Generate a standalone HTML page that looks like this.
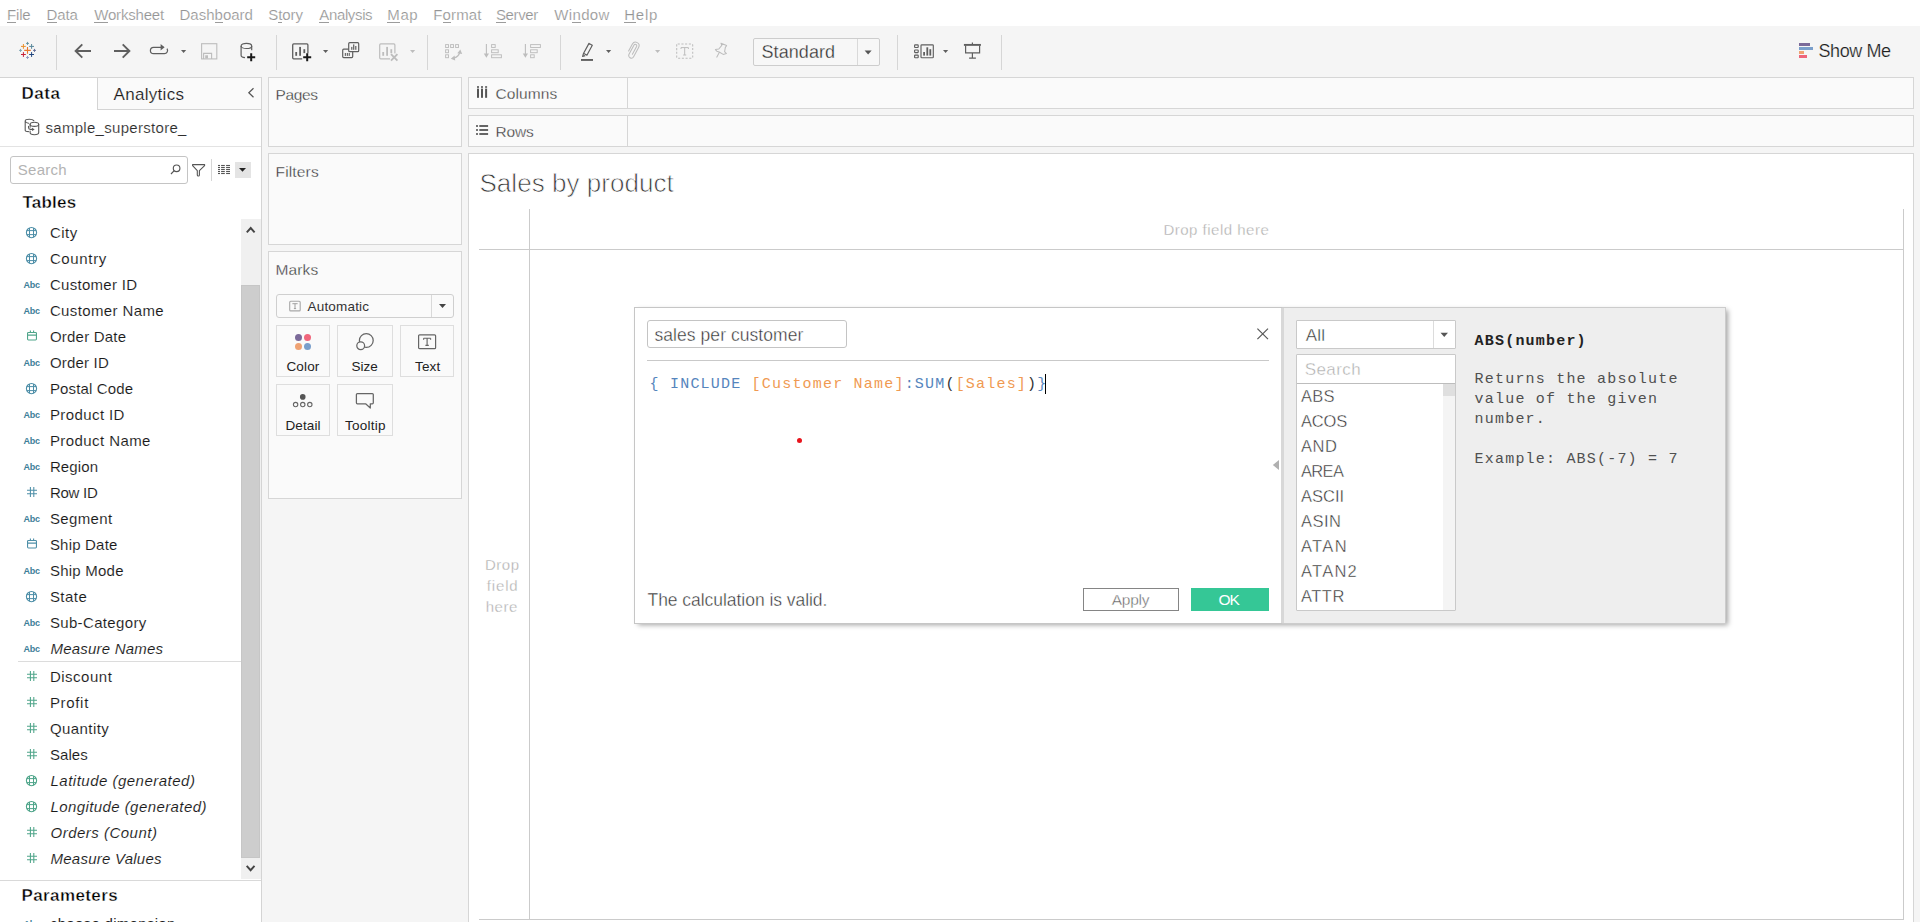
<!DOCTYPE html>
<html lang="en"><head><meta charset="utf-8"><title>Tableau - Sales by product</title>
<style>
html,body{margin:0;padding:0}
body{width:1920px;height:922px;overflow:hidden;position:relative;background:#f5f5f5;font-family:"Liberation Sans", sans-serif;-webkit-font-smoothing:antialiased}
.b{position:absolute;box-sizing:border-box;display:block}
.t{position:absolute;white-space:pre;margin:0;padding:0}
u{text-decoration:none;background:linear-gradient(#9c9c9c,#9c9c9c) no-repeat 0 16px/100% 1px}
</style></head>
<body>
<div class="b" style="left:0px;top:0px;width:1920px;height:26px;background:#ffffff;"></div>
<div class="t" style="left:7.00px;top:4.80px;font-size:15px;line-height:20px;color:#949494;letter-spacing:-0.167px;-webkit-text-stroke:0.2px #fff;"><u>F</u>ile</div>
<div class="t" style="left:46.50px;top:4.80px;font-size:15px;line-height:20px;color:#949494;letter-spacing:-0.083px;-webkit-text-stroke:0.2px #fff;"><u>D</u>ata</div>
<div class="t" style="left:94.25px;top:4.80px;font-size:15px;line-height:20px;color:#949494;letter-spacing:-0.188px;-webkit-text-stroke:0.2px #fff;"><u>W</u>orksheet</div>
<div class="t" style="left:179.50px;top:4.80px;font-size:15px;line-height:20px;color:#949494;-webkit-text-stroke:0.2px #fff;">Dash<u>b</u>oard</div>
<div class="t" style="left:268.25px;top:4.80px;font-size:15px;line-height:20px;color:#949494;letter-spacing:-0.062px;-webkit-text-stroke:0.2px #fff;">S<u>t</u>ory</div>
<div class="t" style="left:319.25px;top:4.80px;font-size:15px;line-height:20px;color:#949494;letter-spacing:-0.357px;-webkit-text-stroke:0.2px #fff;"><u>A</u>nalysis</div>
<div class="t" style="left:387.25px;top:4.80px;font-size:15px;line-height:20px;color:#949494;letter-spacing:0.625px;-webkit-text-stroke:0.2px #fff;"><u>M</u>ap</div>
<div class="t" style="left:433.25px;top:4.80px;font-size:15px;line-height:20px;color:#949494;letter-spacing:0.150px;-webkit-text-stroke:0.2px #fff;">F<u>o</u>rmat</div>
<div class="t" style="left:496.00px;top:4.80px;font-size:15px;line-height:20px;color:#949494;letter-spacing:-0.400px;-webkit-text-stroke:0.2px #fff;"><u>S</u>erver</div>
<div class="t" style="left:554.25px;top:4.80px;font-size:15px;line-height:20px;color:#949494;letter-spacing:0.350px;-webkit-text-stroke:0.2px #fff;">Wi<u>n</u>dow</div>
<div class="t" style="left:624.25px;top:4.80px;font-size:15px;line-height:20px;color:#949494;letter-spacing:0.750px;-webkit-text-stroke:0.2px #fff;"><u>H</u>elp</div>
<div class="b" style="left:0px;top:26px;width:1920px;height:51px;background:#f5f5f5;"></div>
<div class="b" style="left:56px;top:35px;width:1px;height:35px;background:#d6d6d6"></div>
<div class="b" style="left:276px;top:35px;width:1px;height:35px;background:#d6d6d6"></div>
<div class="b" style="left:427px;top:35px;width:1px;height:35px;background:#d6d6d6"></div>
<div class="b" style="left:560px;top:35px;width:1px;height:35px;background:#d6d6d6"></div>
<div class="b" style="left:897px;top:35px;width:1px;height:35px;background:#d6d6d6"></div>
<div class="b" style="left:1001px;top:35px;width:1px;height:35px;background:#d6d6d6"></div>
<div class="b" style="left:0px;top:77px;width:262px;height:845px;background:#ffffff;"></div>
<div class="b" style="left:0px;top:77px;width:262px;height:1px;background:#d4d4d4"></div>
<div class="b" style="left:261px;top:77px;width:1px;height:845px;background:#d4d4d4"></div>
<div class="b" style="left:97px;top:78px;width:164px;height:32px;background:#fafafa;"></div>
<div class="b" style="left:97px;top:78px;width:1px;height:32px;background:#d4d4d4"></div>
<div class="b" style="left:97px;top:109px;width:164px;height:1px;background:#d4d4d4"></div>
<div class="t" style="left:21.50px;top:82.80px;font-size:17px;line-height:22px;color:#000;font-weight:bold;letter-spacing:0.500px;-webkit-text-stroke:0.4px #fff;">Data</div>
<div class="t" style="left:113.50px;top:83.80px;font-size:17px;line-height:22px;color:#1a1a1a;letter-spacing:0.312px;-webkit-text-stroke:0.15px #fafafa;">Analytics</div>
<div class="t" style="left:45.50px;top:117.80px;font-size:15px;line-height:20px;color:#2e2e2e;letter-spacing:0.294px;-webkit-text-stroke:0.15px #fff;">sample_superstore_</div>
<div class="b" style="left:0px;top:146px;width:261px;height:1px;background:#e3e3e3"></div>
<div class="b" style="left:10px;top:156px;width:178px;height:28px;background:#fff;border:1px solid #c4c4c4;border-radius:3px;"></div>
<div class="t" style="left:17.70px;top:159.80px;font-size:15px;line-height:20px;color:#b3b3b3;letter-spacing:0.300px;">Search</div>
<div class="b" style="left:211px;top:159px;width:1px;height:22px;background:#d6d6d6"></div>
<div class="b" style="left:235px;top:162px;width:16px;height:16px;background:#e4e4e4;"></div>
<div class="t" style="left:22.50px;top:191.80px;font-size:17px;line-height:22px;color:#000;font-weight:bold;letter-spacing:0.200px;-webkit-text-stroke:0.4px #fff;">Tables</div>
<div class="t" style="left:49.90px;top:222.80px;font-size:15px;line-height:20px;color:#1a1a1a;letter-spacing:0.500px;-webkit-text-stroke:0.1px #fff;">City</div>
<div class="t" style="left:49.90px;top:248.80px;font-size:15px;line-height:20px;color:#1a1a1a;letter-spacing:0.650px;-webkit-text-stroke:0.1px #fff;">Country</div>
<div class="t" style="left:49.90px;top:274.80px;font-size:15px;line-height:20px;color:#1a1a1a;letter-spacing:0.290px;-webkit-text-stroke:0.1px #fff;">Customer ID</div>
<div class="t" style="left:49.90px;top:300.80px;font-size:15px;line-height:20px;color:#1a1a1a;letter-spacing:0.375px;-webkit-text-stroke:0.1px #fff;">Customer Name</div>
<div class="t" style="left:49.90px;top:326.80px;font-size:15px;line-height:20px;color:#1a1a1a;letter-spacing:0.222px;-webkit-text-stroke:0.1px #fff;">Order Date</div>
<div class="t" style="left:49.90px;top:352.80px;font-size:15px;line-height:20px;color:#1a1a1a;letter-spacing:0.200px;-webkit-text-stroke:0.1px #fff;">Order ID</div>
<div class="t" style="left:49.90px;top:378.80px;font-size:15px;line-height:20px;color:#1a1a1a;letter-spacing:0.160px;-webkit-text-stroke:0.1px #fff;">Postal Code</div>
<div class="t" style="left:49.90px;top:404.80px;font-size:15px;line-height:20px;color:#1a1a1a;letter-spacing:0.411px;-webkit-text-stroke:0.1px #fff;">Product ID</div>
<div class="t" style="left:49.90px;top:430.80px;font-size:15px;line-height:20px;color:#1a1a1a;letter-spacing:0.427px;-webkit-text-stroke:0.1px #fff;">Product Name</div>
<div class="t" style="left:49.90px;top:456.80px;font-size:15px;line-height:20px;color:#1a1a1a;letter-spacing:0.120px;-webkit-text-stroke:0.1px #fff;">Region</div>
<div class="t" style="left:49.90px;top:482.80px;font-size:15px;line-height:20px;color:#1a1a1a;letter-spacing:-0.240px;-webkit-text-stroke:0.1px #fff;">Row ID</div>
<div class="t" style="left:49.90px;top:508.80px;font-size:15px;line-height:20px;color:#1a1a1a;letter-spacing:0.383px;-webkit-text-stroke:0.1px #fff;">Segment</div>
<div class="t" style="left:49.90px;top:534.80px;font-size:15px;line-height:20px;color:#1a1a1a;letter-spacing:0.200px;-webkit-text-stroke:0.1px #fff;">Ship Date</div>
<div class="t" style="left:49.90px;top:560.80px;font-size:15px;line-height:20px;color:#1a1a1a;letter-spacing:0.238px;-webkit-text-stroke:0.1px #fff;">Ship Mode</div>
<div class="t" style="left:49.90px;top:586.80px;font-size:15px;line-height:20px;color:#1a1a1a;letter-spacing:0.475px;-webkit-text-stroke:0.1px #fff;">State</div>
<div class="t" style="left:49.90px;top:612.80px;font-size:15px;line-height:20px;color:#1a1a1a;letter-spacing:0.345px;-webkit-text-stroke:0.1px #fff;">Sub-Category</div>
<div class="t" style="left:50.50px;top:638.80px;font-size:15px;line-height:20px;color:#1a1a1a;font-style:italic;letter-spacing:0.200px;-webkit-text-stroke:0.1px #fff;">Measure Names</div>
<div class="t" style="left:49.90px;top:666.80px;font-size:15px;line-height:20px;color:#1a1a1a;letter-spacing:0.514px;-webkit-text-stroke:0.1px #fff;">Discount</div>
<div class="t" style="left:49.90px;top:692.80px;font-size:15px;line-height:20px;color:#1a1a1a;letter-spacing:0.680px;-webkit-text-stroke:0.1px #fff;">Profit</div>
<div class="t" style="left:49.90px;top:718.80px;font-size:15px;line-height:20px;color:#1a1a1a;letter-spacing:0.443px;-webkit-text-stroke:0.1px #fff;">Quantity</div>
<div class="t" style="left:49.90px;top:744.80px;font-size:15px;line-height:20px;color:#1a1a1a;letter-spacing:0.075px;-webkit-text-stroke:0.1px #fff;">Sales</div>
<div class="t" style="left:50.50px;top:770.80px;font-size:15px;line-height:20px;color:#1a1a1a;font-style:italic;letter-spacing:0.489px;-webkit-text-stroke:0.1px #fff;">Latitude (generated)</div>
<div class="t" style="left:50.50px;top:796.80px;font-size:15px;line-height:20px;color:#1a1a1a;font-style:italic;letter-spacing:0.415px;-webkit-text-stroke:0.1px #fff;">Longitude (generated)</div>
<div class="t" style="left:50.50px;top:822.80px;font-size:15px;line-height:20px;color:#1a1a1a;font-style:italic;letter-spacing:0.492px;-webkit-text-stroke:0.1px #fff;">Orders (Count)</div>
<div class="t" style="left:50.50px;top:848.80px;font-size:15px;line-height:20px;color:#1a1a1a;font-style:italic;letter-spacing:0.246px;-webkit-text-stroke:0.1px #fff;">Measure Values</div>
<div class="b" style="left:18px;top:661px;width:223px;height:1px;background:#dcdcdc"></div>
<div class="b" style="left:241px;top:219px;width:20px;height:660px;background:#f0f0f0;"></div>
<div class="b" style="left:241px;top:285px;width:19px;height:573px;background:#cdcdcd;border:1px solid #c6c6c6;"></div>
<div class="b" style="left:0px;top:880px;width:261px;height:1px;background:#d9d9d9"></div>
<div class="t" style="left:21.50px;top:884.80px;font-size:17px;line-height:22px;color:#000;font-weight:bold;letter-spacing:0.389px;-webkit-text-stroke:0.4px #fff;">Parameters</div>
<div class="t" style="left:49.90px;top:913.80px;font-size:15px;line-height:20px;color:#1e1e1e;letter-spacing:0.300px;">choose dimension</div>
<div class="b" style="left:268px;top:77px;width:194px;height:70px;background:#fafafa;border:1px solid #d6d6d6;"></div>
<div class="t" style="left:275.50px;top:84.80px;font-size:15.5px;line-height:20px;color:#333;letter-spacing:-0.375px;-webkit-text-stroke:0.3px #fafafa;">Pages</div>
<div class="b" style="left:268px;top:153px;width:194px;height:92px;background:#fafafa;border:1px solid #d6d6d6;"></div>
<div class="t" style="left:275.50px;top:161.80px;font-size:15.5px;line-height:20px;color:#333;letter-spacing:0.167px;-webkit-text-stroke:0.3px #fafafa;">Filters</div>
<div class="b" style="left:268px;top:251px;width:194px;height:248px;background:#fafafa;border:1px solid #d6d6d6;"></div>
<div class="t" style="left:275.50px;top:259.80px;font-size:15.5px;line-height:20px;color:#333;letter-spacing:0.125px;-webkit-text-stroke:0.3px #fafafa;">Marks</div>
<div class="b" style="left:276px;top:294px;width:178px;height:24px;background:#fafafa;border:1px solid #cfcfcf;border-radius:3px;"></div>
<div class="b" style="left:431px;top:295px;width:1px;height:22px;background:#d9d9d9"></div>
<div class="t" style="left:307.50px;top:297.80px;font-size:13.5px;line-height:18px;color:#333;letter-spacing:0.188px;">Automatic</div>
<div class="b" style="left:276px;top:325px;width:54px;height:52px;background:#fafafa;border:1px solid #dedede;"></div>
<div class="b" style="left:337px;top:325px;width:56px;height:52px;background:#fafafa;border:1px solid #dedede;"></div>
<div class="b" style="left:400px;top:325px;width:54px;height:52px;background:#fafafa;border:1px solid #dedede;"></div>
<div class="b" style="left:276px;top:384px;width:54px;height:52px;background:#fafafa;border:1px solid #dedede;"></div>
<div class="b" style="left:337px;top:384px;width:56px;height:52px;background:#fafafa;border:1px solid #dedede;"></div>
<div class="t" style="left:286.50px;top:357.80px;font-size:13.5px;line-height:18px;color:#222;letter-spacing:0.125px;">Color</div>
<div class="t" style="left:351.50px;top:357.80px;font-size:13.5px;line-height:18px;color:#222;">Size</div>
<div class="t" style="left:415.00px;top:357.80px;font-size:13.5px;line-height:18px;color:#222;letter-spacing:0.167px;">Text</div>
<div class="t" style="left:285.50px;top:416.80px;font-size:13.5px;line-height:18px;color:#222;letter-spacing:0.100px;">Detail</div>
<div class="t" style="left:345.00px;top:416.80px;font-size:13.5px;line-height:18px;color:#222;letter-spacing:0.250px;">Tooltip</div>
<div class="b" style="left:468px;top:77px;width:1446px;height:32px;background:#fafafa;border:1px solid #d6d6d6;"></div>
<div class="b" style="left:627px;top:78px;width:1px;height:30px;background:#d6d6d6"></div>
<div class="t" style="left:495.50px;top:83.80px;font-size:15.5px;line-height:20px;color:#333;letter-spacing:0.083px;-webkit-text-stroke:0.3px #fafafa;">Columns</div>
<div class="b" style="left:468px;top:115px;width:1446px;height:32px;background:#fafafa;border:1px solid #d6d6d6;"></div>
<div class="b" style="left:627px;top:116px;width:1px;height:30px;background:#d6d6d6"></div>
<div class="t" style="left:495.50px;top:121.80px;font-size:15.5px;line-height:20px;color:#333;letter-spacing:-0.167px;-webkit-text-stroke:0.3px #fafafa;">Rows</div>
<div class="b" style="left:468px;top:153px;width:1446px;height:780px;background:#ffffff;border:1px solid #d6d6d6;"></div>
<div class="t" style="left:479.50px;top:166.30px;font-size:26px;line-height:34px;color:#3a3a3a;letter-spacing:0.033px;-webkit-text-stroke:0.75px #fff;">Sales by product</div>
<div class="b" style="left:529px;top:209px;width:1px;height:711px;background:#cbcbcb"></div>
<div class="b" style="left:1903px;top:209px;width:1px;height:711px;background:#cbcbcb"></div>
<div class="b" style="left:479px;top:249px;width:1425px;height:1px;background:#cbcbcb"></div>
<div class="b" style="left:479px;top:919px;width:1425px;height:1px;background:#cbcbcb"></div>
<div class="t" style="left:1163.40px;top:219.80px;font-size:15px;line-height:20px;color:#adadad;letter-spacing:0.500px;-webkit-text-stroke:0.3px #fff;">Drop field here</div>
<div class="t" style="left:484.90px;top:554.80px;font-size:15px;line-height:20px;color:#adadad;letter-spacing:0.567px;-webkit-text-stroke:0.3px #fff;">Drop</div>
<div class="t" style="left:486.70px;top:575.80px;font-size:15px;line-height:20px;color:#adadad;letter-spacing:0.875px;-webkit-text-stroke:0.3px #fff;">field</div>
<div class="t" style="left:485.70px;top:596.80px;font-size:15px;line-height:20px;color:#adadad;letter-spacing:0.567px;-webkit-text-stroke:0.3px #fff;">here</div>
<div class="b" style="left:1799px;top:43px;width:11px;height:3px;background:#7b6a99;"></div>
<div class="b" style="left:1799px;top:47px;width:14px;height:3px;background:#7a9fcb;"></div>
<div class="b" style="left:1799px;top:51px;width:5px;height:3px;background:#f0a272;"></div>
<div class="b" style="left:1799px;top:55px;width:8px;height:3px;background:#ee657a;"></div>
<div class="t" style="left:1818.50px;top:39.80px;font-size:18px;line-height:23px;color:#1e1e1e;letter-spacing:-0.417px;-webkit-text-stroke:0.2px #f5f5f5;">Show Me</div>
<div class="b" style="left:753px;top:38px;width:127px;height:28px;background:#f7f7f7;border:1px solid #cdcdcd;border-radius:2px;"></div>
<div class="b" style="left:857px;top:39px;width:1px;height:26px;background:#d9d9d9"></div>
<div class="t" style="left:761.50px;top:40.80px;font-size:18px;line-height:23px;color:#2e2e2e;letter-spacing:0.071px;-webkit-text-stroke:0.3px #f7f7f7;">Standard</div>
<div class="b" style="left:634px;top:307px;width:1092px;height:317px;background:#efefef;box-shadow:3px 2px 5px -1px rgba(0,0,0,0.36)"></div>
<div class="b" style="left:634px;top:307px;width:1092px;height:317px;background:#eeeeee;border:1px solid #cccccc;"></div>
<div class="b" style="left:634px;top:307px;width:648px;height:317px;background:#ffffff;border:1px solid #c6c6c6;"></div>
<div class="b" style="left:1281px;top:308px;width:3px;height:315px;background:#d8d8d8;"></div>
<div class="b" style="left:647px;top:320px;width:200px;height:28px;background:#fff;border:1px solid #c4c4c4;border-radius:3px;"></div>
<div class="t" style="left:654.50px;top:323.80px;font-size:17.5px;line-height:23px;color:#2e2e2e;letter-spacing:0.059px;-webkit-text-stroke:0.4px #fff;">sales per customer</div>
<div class="b" style="left:647px;top:360px;width:622px;height:1px;background:#c9c9c9"></div>
<svg class="b" style="left:1255px;top:325.5px;" width="16" height="16" viewBox="0 0 16 16"><path d="M2.4 2.6 L13 13.2 M13 2.6 L2.4 13.2" stroke="#585858" stroke-width="1.2" fill="none"/></svg>
<div class="t" style="left:649.60px;top:374.80px;font-size:15px;line-height:20px;color:#5585bd;font-family:'Liberation Mono', monospace;letter-spacing:1.2px;"><span style="color:#5585bd">{ INCLUDE </span><span style="color:#f09a52">[Customer Name]</span><span style="color:#5585bd">:SUM</span><span style="color:#333">(</span><span style="color:#f09a52">[Sales]</span><span style="color:#333">)</span><span style="color:#5585bd">}</span></div>
<div class="b" style="left:1045px;top:374px;width:1px;height:20px;background:#000;"></div>
<div class="b" style="left:796.5px;top:437.5px;width:5px;height:5px;border-radius:50%;background:#e8141c"></div>
<svg class="b" style="left:1272px;top:459px;" width="8" height="12" viewBox="0 0 8 12"><path d="M7 1 L7 11 L0.8 6 Z" fill="#b0b0b0"/></svg>
<div class="t" style="left:647.50px;top:588.80px;font-size:17.5px;line-height:23px;color:#2e2e2e;letter-spacing:-0.042px;-webkit-text-stroke:0.4px #fff;">The calculation is valid.</div>
<div class="b" style="left:1083px;top:588px;width:96px;height:23px;background:#fff;border:1px solid #858585;"></div>
<div class="t" style="left:1111.75px;top:589.80px;font-size:15.5px;line-height:20px;color:#5e5e5e;letter-spacing:-0.250px;-webkit-text-stroke:0.4px #fff;">Apply</div>
<div class="b" style="left:1191px;top:588px;width:78px;height:23px;background:#35c796;"></div>
<div class="t" style="left:1218.50px;top:589.80px;font-size:15.5px;line-height:20px;color:#fff;letter-spacing:-1.000px;">OK</div>
<div class="b" style="left:1296px;top:320px;width:160px;height:29px;background:#fff;border:1px solid #c9c9c9;border-radius:1px;"></div>
<div class="b" style="left:1433px;top:321px;width:1px;height:27px;background:#dcdcdc"></div>
<svg class="b" style="left:1440px;top:332px;" width="9" height="6" viewBox="0 0 9 6"><path d="M0.5 0.8 L8 0.8 L4.25 4.9 Z" fill="#555"/></svg>
<div class="t" style="left:1305.75px;top:324.80px;font-size:17px;line-height:22px;color:#2e2e2e;letter-spacing:0.250px;-webkit-text-stroke:0.4px #fff;">All</div>
<div class="b" style="left:1296px;top:354px;width:160px;height:257px;background:#fff;border:1px solid #c9c9c9;border-radius:1px;"></div>
<div class="b" style="left:1297px;top:383px;width:158px;height:1px;background:#bdbdbd"></div>
<div class="t" style="left:1304.75px;top:358.80px;font-size:17px;line-height:22px;color:#adadad;letter-spacing:0.400px;-webkit-text-stroke:0.4px #fff;">Search</div>
<div class="t" style="left:1301.00px;top:385.80px;font-size:16.5px;line-height:21px;color:#2e2e2e;letter-spacing:0.250px;-webkit-text-stroke:0.4px #fff;">ABS</div>
<div class="t" style="left:1301.00px;top:410.80px;font-size:16.5px;line-height:21px;color:#2e2e2e;letter-spacing:-0.167px;-webkit-text-stroke:0.4px #fff;">ACOS</div>
<div class="t" style="left:1301.00px;top:435.80px;font-size:16.5px;line-height:21px;color:#2e2e2e;letter-spacing:0.500px;-webkit-text-stroke:0.4px #fff;">AND</div>
<div class="t" style="left:1301.00px;top:460.80px;font-size:16.5px;line-height:21px;color:#2e2e2e;letter-spacing:-0.667px;-webkit-text-stroke:0.4px #fff;">AREA</div>
<div class="t" style="left:1301.00px;top:485.80px;font-size:16.5px;line-height:21px;color:#2e2e2e;-webkit-text-stroke:0.4px #fff;">ASCII</div>
<div class="t" style="left:1301.00px;top:510.80px;font-size:16.5px;line-height:21px;color:#2e2e2e;letter-spacing:0.500px;-webkit-text-stroke:0.4px #fff;">ASIN</div>
<div class="t" style="left:1301.00px;top:535.80px;font-size:16.5px;line-height:21px;color:#2e2e2e;letter-spacing:1.333px;-webkit-text-stroke:0.4px #fff;">ATAN</div>
<div class="t" style="left:1301.00px;top:560.80px;font-size:16.5px;line-height:21px;color:#2e2e2e;letter-spacing:1.250px;-webkit-text-stroke:0.4px #fff;">ATAN2</div>
<div class="t" style="left:1301.00px;top:585.80px;font-size:16.5px;line-height:21px;color:#2e2e2e;letter-spacing:0.500px;-webkit-text-stroke:0.4px #fff;">ATTR</div>
<div class="b" style="left:1443px;top:384px;width:12px;height:226px;background:#f4f4f4;"></div>
<div class="b" style="left:1443px;top:384px;width:12px;height:12px;background:#dfdfdf;"></div>
<div class="t" style="left:1474.60px;top:331.80px;font-size:15px;line-height:20px;color:#222;font-weight:bold;font-family:'Liberation Mono', monospace;letter-spacing:1.2px;">ABS(number)</div>
<div class="t" style="left:1474.60px;top:369.80px;font-size:15px;line-height:20px;color:#505050;font-family:'Liberation Mono', monospace;letter-spacing:1.2px;">Returns the absolute</div>
<div class="t" style="left:1474.60px;top:389.80px;font-size:15px;line-height:20px;color:#505050;font-family:'Liberation Mono', monospace;letter-spacing:1.2px;">value of the given</div>
<div class="t" style="left:1474.60px;top:409.80px;font-size:15px;line-height:20px;color:#505050;font-family:'Liberation Mono', monospace;letter-spacing:1.2px;">number.</div>
<div class="t" style="left:1474.60px;top:449.80px;font-size:15px;line-height:20px;color:#505050;font-family:'Liberation Mono', monospace;letter-spacing:1.2px;">Example: ABS(-7) = 7</div>
<svg class="b" style="left:24px;top:225px;" width="15" height="15" viewBox="0 0 15 15"><g fill="none" stroke="#4e8fa8" stroke-width="1.1"><circle cx="7.5" cy="7.6" r="5.1"/><path d="M5.5 3V12.2M9.5 3V12.2M2.9 5.6H12.1M2.9 9.6H12.1" stroke-width="1"/></g></svg>
<svg class="b" style="left:24px;top:251px;" width="15" height="15" viewBox="0 0 15 15"><g fill="none" stroke="#4e8fa8" stroke-width="1.1"><circle cx="7.5" cy="7.6" r="5.1"/><path d="M5.5 3V12.2M9.5 3V12.2M2.9 5.6H12.1M2.9 9.6H12.1" stroke-width="1"/></g></svg>
<div class="t" style="left:23.60px;top:279.30px;font-size:9px;line-height:12px;color:#3d7e99;font-weight:bold;letter-spacing:-0.3px;">Abc</div>
<div class="t" style="left:23.60px;top:305.30px;font-size:9px;line-height:12px;color:#3d7e99;font-weight:bold;letter-spacing:-0.3px;">Abc</div>
<svg class="b" style="left:25px;top:329px;" width="14" height="14" viewBox="0 0 14 14"><g fill="none" stroke="#4fa58a" stroke-width="1.1"><rect x="2.55" y="3.45" width="8.9" height="7.5" rx="0.9"/><path d="M2.5 6.1H11.5M5.4 1.5V3.4M8.6 1.5V3.4"/></g></svg>
<div class="t" style="left:23.60px;top:357.30px;font-size:9px;line-height:12px;color:#3d7e99;font-weight:bold;letter-spacing:-0.3px;">Abc</div>
<svg class="b" style="left:24px;top:381px;" width="15" height="15" viewBox="0 0 15 15"><g fill="none" stroke="#4e8fa8" stroke-width="1.1"><circle cx="7.5" cy="7.6" r="5.1"/><path d="M5.5 3V12.2M9.5 3V12.2M2.9 5.6H12.1M2.9 9.6H12.1" stroke-width="1"/></g></svg>
<div class="t" style="left:23.60px;top:409.30px;font-size:9px;line-height:12px;color:#3d7e99;font-weight:bold;letter-spacing:-0.3px;">Abc</div>
<div class="t" style="left:23.60px;top:435.30px;font-size:9px;line-height:12px;color:#3d7e99;font-weight:bold;letter-spacing:-0.3px;">Abc</div>
<div class="t" style="left:23.60px;top:461.30px;font-size:9px;line-height:12px;color:#3d7e99;font-weight:bold;letter-spacing:-0.3px;">Abc</div>
<svg class="b" style="left:25px;top:485px;" width="14" height="14" viewBox="0 0 14 14"><path d="M5.4 2V12M8.8 2V12M2 5.3H12M2 8.8H12" fill="none" stroke="#4e8fa8" stroke-width="1.05"/></svg>
<div class="t" style="left:23.60px;top:513.30px;font-size:9px;line-height:12px;color:#3d7e99;font-weight:bold;letter-spacing:-0.3px;">Abc</div>
<svg class="b" style="left:25px;top:537px;" width="14" height="14" viewBox="0 0 14 14"><g fill="none" stroke="#4e8fa8" stroke-width="1.1"><rect x="2.55" y="3.45" width="8.9" height="7.5" rx="0.9"/><path d="M2.5 6.1H11.5M5.4 1.5V3.4M8.6 1.5V3.4"/></g></svg>
<div class="t" style="left:23.60px;top:565.30px;font-size:9px;line-height:12px;color:#3d7e99;font-weight:bold;letter-spacing:-0.3px;">Abc</div>
<svg class="b" style="left:24px;top:589px;" width="15" height="15" viewBox="0 0 15 15"><g fill="none" stroke="#4e8fa8" stroke-width="1.1"><circle cx="7.5" cy="7.6" r="5.1"/><path d="M5.5 3V12.2M9.5 3V12.2M2.9 5.6H12.1M2.9 9.6H12.1" stroke-width="1"/></g></svg>
<div class="t" style="left:23.60px;top:617.30px;font-size:9px;line-height:12px;color:#3d7e99;font-weight:bold;letter-spacing:-0.3px;">Abc</div>
<div class="t" style="left:23.60px;top:643.30px;font-size:9px;line-height:12px;color:#3d7e99;font-weight:bold;letter-spacing:-0.3px;">Abc</div>
<svg class="b" style="left:25px;top:669px;" width="14" height="14" viewBox="0 0 14 14"><path d="M5.4 2V12M8.8 2V12M2 5.3H12M2 8.8H12" fill="none" stroke="#4fa58a" stroke-width="1.05"/></svg>
<svg class="b" style="left:25px;top:695px;" width="14" height="14" viewBox="0 0 14 14"><path d="M5.4 2V12M8.8 2V12M2 5.3H12M2 8.8H12" fill="none" stroke="#4fa58a" stroke-width="1.05"/></svg>
<svg class="b" style="left:25px;top:721px;" width="14" height="14" viewBox="0 0 14 14"><path d="M5.4 2V12M8.8 2V12M2 5.3H12M2 8.8H12" fill="none" stroke="#4fa58a" stroke-width="1.05"/></svg>
<svg class="b" style="left:25px;top:747px;" width="14" height="14" viewBox="0 0 14 14"><path d="M5.4 2V12M8.8 2V12M2 5.3H12M2 8.8H12" fill="none" stroke="#4fa58a" stroke-width="1.05"/></svg>
<svg class="b" style="left:24px;top:773px;" width="15" height="15" viewBox="0 0 15 15"><g fill="none" stroke="#4fa58a" stroke-width="1.1"><circle cx="7.5" cy="7.6" r="5.1"/><path d="M5.5 3V12.2M9.5 3V12.2M2.9 5.6H12.1M2.9 9.6H12.1" stroke-width="1"/></g></svg>
<svg class="b" style="left:24px;top:799px;" width="15" height="15" viewBox="0 0 15 15"><g fill="none" stroke="#4fa58a" stroke-width="1.1"><circle cx="7.5" cy="7.6" r="5.1"/><path d="M5.5 3V12.2M9.5 3V12.2M2.9 5.6H12.1M2.9 9.6H12.1" stroke-width="1"/></g></svg>
<svg class="b" style="left:25px;top:825px;" width="14" height="14" viewBox="0 0 14 14"><path d="M5.4 2V12M8.8 2V12M2 5.3H12M2 8.8H12" fill="none" stroke="#4fa58a" stroke-width="1.05"/></svg>
<svg class="b" style="left:25px;top:851px;" width="14" height="14" viewBox="0 0 14 14"><path d="M5.4 2V12M8.8 2V12M2 5.3H12M2 8.8H12" fill="none" stroke="#4fa58a" stroke-width="1.05"/></svg>
<div class="t" style="left:23.60px;top:918.30px;font-size:9px;line-height:12px;color:#3d7e99;font-weight:bold;letter-spacing:-0.3px;">Abc</div>
<svg class="b" style="left:246px;top:86px;" width="10" height="14" viewBox="0 0 10 14"><path d="M7.5 2.2 L2.8 6.7 L7.5 11.2" fill="none" stroke="#555" stroke-width="1.2"/></svg>
<svg class="b" style="left:24px;top:118px;" width="17" height="18" viewBox="0 0 17 18"><g fill="none" stroke="#5a5a5a" stroke-width="1.1" stroke-linecap="round"><path d="M1.2 3C1.2 1.7 3 1.2 5.4 1.2C7.6 1.2 9.2 1.7 9.8 2.6M1.2 3C1.4 4.2 2.8 5 4.6 5.3M1.2 3V12.3C1.4 13.1 2.8 13.6 4.5 13.6"/><ellipse cx="10.4" cy="6.3" rx="4.3" ry="2.1"/><path d="M6.1 6.3V9.2M6.1 13V14.6C6.1 16.3 8 16.8 10.4 16.8C12.8 16.8 14.7 16.3 14.7 14.6V6.3"/><path d="M4.5 8.4V9.6C4.5 10.9 5.2 11.4 6.4 11.4H8.6"/></g><path d="M8 9.7L10.7 11.4L8 13.1Z" fill="#5a5a5a"/></svg>
<svg class="b" style="left:169px;top:163px;" width="13" height="13" viewBox="0 0 13 13"><g fill="none" stroke="#555" stroke-width="1.15"><circle cx="7.6" cy="5.3" r="3.3"/><path d="M5.2 7.7L2 11"/></g></svg>
<svg class="b" style="left:190px;top:162px;" width="18" height="16" viewBox="0 0 18 16"><path d="M2.6 2.6H14.6V3.6L9.4 8.6V13a1.05 1.05 0 0 1 -2.1 0V8.6L2.6 3.6Z" fill="none" stroke="#555" stroke-width="1.1" stroke-linejoin="round"/></svg>
<svg class="b" style="left:217px;top:164px;" width="14" height="11" viewBox="0 0 14 11"><g fill="#555"><rect x="1" y="0.95" width="2" height="1.1"/><rect x="4.1" y="0.95" width="3.7" height="1.1"/><rect x="9.1" y="0.95" width="3.9" height="1.1"/><rect x="1" y="2.95" width="2" height="1.1"/><rect x="4.1" y="2.95" width="3.7" height="1.1"/><rect x="9.1" y="2.95" width="3.9" height="1.1"/><rect x="1" y="4.95" width="2" height="1.1"/><rect x="4.1" y="4.95" width="3.7" height="1.1"/><rect x="9.1" y="4.95" width="3.9" height="1.1"/><rect x="1" y="6.95" width="2" height="1.1"/><rect x="4.1" y="6.95" width="3.7" height="1.1"/><rect x="9.1" y="6.95" width="3.9" height="1.1"/><rect x="1" y="8.95" width="2" height="1.1"/><rect x="4.1" y="8.95" width="3.7" height="1.1"/><rect x="9.1" y="8.95" width="3.9" height="1.1"/></g></svg>
<svg class="b" style="left:238px;top:167px;" width="10" height="6" viewBox="0 0 10 6"><path d="M1 1H8L4.5 4.8Z" fill="#222"/></svg>
<svg class="b" style="left:244px;top:224px;" width="14" height="12" viewBox="0 0 14 12"><path d="M2.8 8.4L6.7 4L10.6 8.4" fill="none" stroke="#444" stroke-width="1.9"/></svg>
<svg class="b" style="left:244px;top:862px;" width="14" height="12" viewBox="0 0 14 12"><path d="M2.7 3.8L6.6 8.2L10.5 3.8" fill="none" stroke="#444" stroke-width="1.9"/></svg>
<svg class="b" style="left:475px;top:85px;" width="14" height="14" viewBox="0 0 14 14"><g fill="#555"><rect x="2" y="3.6" width="2" height="9.2"/><rect x="6" y="3.6" width="2" height="9.2"/><rect x="10.1" y="3.6" width="2" height="9.2"/><rect x="2" y="1.2" width="2" height="1.6"/><rect x="6" y="1.2" width="2" height="1.6"/><rect x="10.1" y="1.2" width="2" height="1.6"/></g></svg>
<svg class="b" style="left:474px;top:124px;" width="16" height="14" viewBox="0 0 16 14"><g fill="#555"><rect x="5.3" y="1.1" width="8.8" height="1.8"/><rect x="5.3" y="5.1" width="8.8" height="1.8"/><rect x="5.3" y="9.1" width="8.8" height="1.8"/><rect x="2.1" y="1.1" width="1.8" height="1.8"/><rect x="2.1" y="5.1" width="1.8" height="1.8"/><rect x="2.1" y="9.1" width="1.8" height="1.8"/></g></svg>
<svg class="b" style="left:438px;top:303px;" width="10" height="7" viewBox="0 0 10 7"><path d="M1 1H8L4.5 5Z" fill="#444"/></svg>
<svg class="b" style="left:288px;top:300px;" width="14" height="12" viewBox="0 0 14 12"><rect x="1.7" y="1.3" width="10.5" height="9.6" rx="1" fill="none" stroke="#a8a8a8" stroke-width="1.1"/><path d="M4.4 3.7H9.6M7 3.7V8.6M5.9 8.6H8.1" stroke="#a0a0a0" stroke-width="1" fill="none"/></svg>
<div class="b" style="left:294.75px;top:333.75px;width:7px;height:7px;border-radius:50%;background:#7b6a99"></div>
<div class="b" style="left:303.6px;top:333.75px;width:7px;height:7px;border-radius:50%;background:#f0667c"></div>
<div class="b" style="left:294.75px;top:342.5px;width:7px;height:7px;border-radius:50%;background:#efa273"></div>
<div class="b" style="left:303.6px;top:342.5px;width:7px;height:7px;border-radius:50%;background:#7a9fcb"></div>
<svg class="b" style="left:355px;top:331px;" width="22" height="22" viewBox="0 0 22 22"><g fill="none" stroke="#666" stroke-width="1.25"><circle cx="11.3" cy="9.5" r="6.9"/><circle cx="5.7" cy="14.7" r="3.9" fill="#fafafa"/></g></svg>
<svg class="b" style="left:417px;top:333px;" width="20" height="18" viewBox="0 0 20 18"><rect x="1.6" y="1.8" width="17" height="13.9" rx="1" fill="none" stroke="#666" stroke-width="1.2"/><path d="M6.6 5.2H13.6M6.6 5.2V6.8M13.6 5.2V6.8M10.1 5.2V12.4M8.4 12.4H11.8" fill="none" stroke="#666" stroke-width="1.15"/></svg>
<svg class="b" style="left:292px;top:392px;" width="22" height="18" viewBox="0 0 22 18"><circle cx="10.75" cy="4.9" r="2.8" fill="#555"/><g fill="none" stroke="#666" stroke-width="1.1"><circle cx="3.6" cy="12.6" r="2.2"/><circle cx="10.75" cy="12.6" r="2.2"/><circle cx="17.8" cy="12.6" r="2.2"/></g></svg>
<svg class="b" style="left:354px;top:391px;" width="22" height="20" viewBox="0 0 22 20"><path d="M3.4 2.6H18.3a1 1 0 0 1 1 1V11.8a1 1 0 0 1 -1 1H16.3V17L11.6 12.8H3.4a1 1 0 0 1 -1 -1V3.6a1 1 0 0 1 1 -1Z" fill="none" stroke="#666" stroke-width="1.25" stroke-linejoin="round"/></svg>
<svg class="b" style="left:14px;top:36px;" width="28" height="28" viewBox="0 0 28 28"><path d="M10.2 14.399999999999999H16.8M13.5 11.099999999999998V17.7" stroke="#e8762d" stroke-width="1.1" fill="none"/><path d="M6.999999999999998 10.399999999999999H11.799999999999999M9.399999999999999 7.999999999999998V12.799999999999999" stroke="#eb912c" stroke-width="1.0" fill="none"/><path d="M15.200000000000001 10.399999999999999H20.0M17.6 7.999999999999998V12.799999999999999" stroke="#59879b" stroke-width="1.0" fill="none"/><path d="M6.999999999999998 18.5H11.799999999999999M9.399999999999999 16.1V20.9" stroke="#c72037" stroke-width="1.0" fill="none"/><path d="M15.200000000000001 18.5H20.0M17.6 16.1V20.9" stroke="#1f457e" stroke-width="1.0" fill="none"/><path d="M12.0 7.399999999999999H15.0M13.5 5.899999999999999V8.899999999999999" stroke="#5b8f9f" stroke-width="0.9" fill="none"/><path d="M12.0 21.5H15.0M13.5 20.0V23.0" stroke="#8c96c0" stroke-width="0.9" fill="none"/><path d="M5.0 14.399999999999999H8.0M6.5 12.899999999999999V15.899999999999999" stroke="#7aa3b1" stroke-width="0.9" fill="none"/><path d="M19.0 14.399999999999999H22.0M20.5 12.899999999999999V15.899999999999999" stroke="#5c6692" stroke-width="0.9" fill="none"/></svg>
<svg class="b" style="left:72px;top:40px;" width="22" height="22" viewBox="0 0 22 22"><path d="M19 11H4M10.3 4.4L3.6 11L10.3 17.6" fill="none" stroke="#5f5f5f" stroke-width="1.9"/></svg>
<svg class="b" style="left:111px;top:40px;" width="22" height="22" viewBox="0 0 22 22"><path d="M3 11H18M11.7 4.4L18.4 11L11.7 17.6" fill="none" stroke="#5f5f5f" stroke-width="1.9"/></svg>
<svg class="b" style="left:148px;top:41px;" width="22" height="16" viewBox="0 0 22 16"><g fill="none" stroke="#5f5f5f" stroke-width="1.25"><path d="M15.5 6.3H5.6a3.2 3.2 0 0 0 0 6.4H16.4a3.2 3.2 0 0 0 2.6 -5"/></g><path d="M12.6 2.9L16.6 6.3L12.6 9.6Z" fill="#5f5f5f"/></svg>
<svg class="b" style="left:180.8px;top:50px;" width="8" height="5" viewBox="0 0 8 5"><path d="M0 0H5.2L2.6 3Z" fill="#5f5f5f"/></svg>
<svg class="b" style="left:200px;top:42px;" width="18" height="18" viewBox="0 0 18 18"><g fill="none" stroke="#bdbdbd" stroke-width="1.1"><rect x="1.6" y="1.7" width="15.2" height="15.2"/><path d="M3.6 16.9V11.4H11.6V16.9"/></g><rect x="5.2" y="13.3" width="2.8" height="3.2" fill="#bdbdbd"/></svg>
<svg class="b" style="left:239px;top:41px;" width="18" height="22" viewBox="0 0 18 22"><g fill="none" stroke="#5f5f5f" stroke-width="1.2"><ellipse cx="7.4" cy="4.9" rx="5.3" ry="2.6"/><path d="M2.1 4.9V14.2c0 1.2 1.6 2.2 3.9 2.5M12.7 4.9V9.3"/></g><path d="M8.2 16.2H16.2M12.2 12.2V20.2" stroke="#1a1a1a" stroke-width="2" fill="none"/></svg>
<svg class="b" style="left:290px;top:41px;" width="24" height="22" viewBox="0 0 24 22"><rect x="2.7" y="2.9" width="15.2" height="14.9" rx="1" fill="none" stroke="#5f5f5f" stroke-width="1.3"/><rect x="5.3" y="11.0" width="1.8" height="3.8" fill="#5f5f5f"/><rect x="9.2" y="5.9" width="1.8" height="8.9" fill="#5f5f5f"/><rect x="13.399999999999999" y="8.2" width="1.8" height="4.4" fill="#5f5f5f"/><rect x="12.2" y="12.2" width="7" height="7.2" fill="#f5f5f5"/><path d="M13.2 16.2H21.2M17.2 12.2V20.2" stroke="#1a1a1a" stroke-width="2" fill="none"/></svg>
<svg class="b" style="left:322.8px;top:50px;" width="8" height="5" viewBox="0 0 8 5"><path d="M0 0H5.2L2.6 3Z" fill="#5f5f5f"/></svg>
<svg class="b" style="left:340px;top:40px;" width="22" height="20" viewBox="0 0 22 20"><g fill="none" stroke="#5f5f5f" stroke-width="1.2"><rect x="8.7" y="2.7" width="10" height="9" rx="1"/><path d="M8.7 9.2H3.7a1 1 0 0 0 -1 1V16.6a1 1 0 0 0 1 1H11.7a1 1 0 0 0 1 -1V11.7"/></g><g fill="#5f5f5f"><rect x="11.2" y="6.9" width="1.2" height="2.9"/><rect x="13.1" y="4.4" width="1.2" height="5.4"/><rect x="15.2" y="6" width="1.2" height="3.8"/><rect x="4.8" y="13" width="1.1" height="2.9"/><rect x="6.8" y="13" width="1.1" height="2.9"/><rect x="8.7" y="13" width="1.1" height="2.9"/></g></svg>
<svg class="b" style="left:377px;top:41px;" width="24" height="22" viewBox="0 0 24 22"><rect x="2.7" y="2.9" width="15.2" height="14.9" rx="1" fill="none" stroke="#bdbdbd" stroke-width="1.2"/><rect x="5.3" y="11.0" width="1.8" height="3.8" fill="#bdbdbd"/><rect x="9.2" y="5.9" width="1.8" height="8.9" fill="#bdbdbd"/><rect x="13.399999999999999" y="8.2" width="1.8" height="4.4" fill="#bdbdbd"/><rect x="13" y="12.4" width="7" height="7.2" fill="#f5f5f5"/><path d="M14 13.2L20.4 19.6M20.4 13.2L14 19.6" stroke="#bdbdbd" stroke-width="1.9" fill="none"/></svg>
<svg class="b" style="left:409.8px;top:50px;" width="8" height="5" viewBox="0 0 8 5"><path d="M0 0H5.2L2.6 3Z" fill="#bdbdbd"/></svg>
<svg class="b" style="left:443px;top:42px;" width="20" height="20" viewBox="0 0 20 20"><rect x="2.6" y="2.6" width="2.9" height="2.9" fill="none" stroke="#bdbdbd" stroke-width="0.95"/><rect x="7.6" y="2.6" width="2.9" height="2.9" fill="none" stroke="#bdbdbd" stroke-width="0.95"/><rect x="12.6" y="2.6" width="2.9" height="2.9" fill="none" stroke="#bdbdbd" stroke-width="0.95"/><rect x="2.6" y="7.8" width="2.9" height="2.9" fill="none" stroke="#bdbdbd" stroke-width="0.95"/><rect x="2.6" y="12.8" width="2.9" height="2.9" fill="none" stroke="#bdbdbd" stroke-width="0.95"/><path d="M10.4 16.2C14 15.2 16.2 12.8 16.9 10" fill="none" stroke="#bdbdbd" stroke-width="1.2"/><path d="M14.3 11.2L17.3 7.6L19.2 11.9Z M11.6 13.6L7.8 16.7L12.2 18.6Z" fill="#bdbdbd"/></svg>
<svg class="b" style="left:483px;top:42px;" width="22" height="18" viewBox="0 0 22 18"><path d="M3.4 2V13.5" stroke="#bdbdbd" stroke-width="1.1" fill="none"/><path d="M0.8 11.4H6L3.4 15.8Z" fill="#bdbdbd"/><rect x="8.6" y="2.6" width="3.6" height="2.9" fill="none" stroke="#bdbdbd" stroke-width="0.95"/><rect x="8.6" y="7.8" width="6.6" height="2.9" fill="none" stroke="#bdbdbd" stroke-width="0.95"/><rect x="8.6" y="12.8" width="9.8" height="2.9" fill="none" stroke="#bdbdbd" stroke-width="0.95"/></svg>
<svg class="b" style="left:522px;top:42px;" width="22" height="18" viewBox="0 0 22 18"><path d="M3.4 2V13.5" stroke="#bdbdbd" stroke-width="1.1" fill="none"/><path d="M0.8 11.4H6L3.4 15.8Z" fill="#bdbdbd"/><rect x="8.6" y="2.6" width="9.8" height="2.9" fill="none" stroke="#bdbdbd" stroke-width="0.95"/><rect x="8.6" y="7.8" width="6.6" height="2.9" fill="none" stroke="#bdbdbd" stroke-width="0.95"/><rect x="8.6" y="12.8" width="3.6" height="2.9" fill="none" stroke="#bdbdbd" stroke-width="0.95"/></svg>
<svg class="b" style="left:578px;top:40px;" width="18" height="22" viewBox="0 0 18 22"><path d="M11 3.4L14.3 5.3L8.9 15.2L5.6 13.3ZM5.6 13.3L4.6 16.4L7.2 15.6" fill="none" stroke="#5f5f5f" stroke-width="1.2" stroke-linejoin="round"/><rect x="3" y="19" width="12" height="1.9" fill="#5f5f5f"/></svg>
<svg class="b" style="left:605.9px;top:50px;" width="8" height="5" viewBox="0 0 8 5"><path d="M0 0H5.2L2.6 3Z" fill="#5f5f5f"/></svg>
<svg class="b" style="left:624px;top:40px;" width="18" height="20" viewBox="0 0 18 20"><path d="M8.4 14.2L12.6 6.6a1.5 1.5 0 0 0 -2.7 -1.4L5 14.2a2.6 2.6 0 0 0 4.6 2.5L14.6 7.4a3.5 3.5 0 0 0 -6.2 -3.4L4.6 11" fill="none" stroke="#bdbdbd" stroke-width="1.05" stroke-linecap="round"/></svg>
<svg class="b" style="left:654.9px;top:50px;" width="8" height="5" viewBox="0 0 8 5"><path d="M0 0H5.2L2.6 3Z" fill="#bdbdbd"/></svg>
<svg class="b" style="left:674px;top:41px;" width="22" height="20" viewBox="0 0 22 20"><rect x="2.7" y="2.9" width="16" height="14.4" rx="1" fill="none" stroke="#bdbdbd" stroke-width="1.05" stroke-dasharray="2.1 1.6"/><path d="M7 6.6H14.4M7 6.6V8M14.4 6.6V8M10.7 6.6V14M9.2 14H12.2" fill="none" stroke="#bdbdbd" stroke-width="1"/></svg>
<svg class="b" style="left:712px;top:40px;" width="18" height="20" viewBox="0 0 18 20"><path d="M9 3.2L14.6 5.6L13.4 7.2L12.6 11.6L14.4 13.6L11.2 14.4L7.2 12L4.8 11.2L3.4 9.6L6.8 9L9.8 5.4Z M7.4 12.2L4.6 17.6" fill="none" stroke="#bdbdbd" stroke-width="1.05" stroke-linejoin="round"/></svg>
<svg class="b" style="left:864px;top:49.5px;" width="9" height="6" viewBox="0 0 9 6"><path d="M0.6 0.4H7.6L4.1 4.4Z" fill="#555"/></svg>
<svg class="b" style="left:912px;top:42px;" width="24" height="18" viewBox="0 0 24 18"><g fill="none" stroke="#5f5f5f" stroke-width="1.15"><rect x="2.6" y="2.9" width="3.6" height="2.6" rx="0.5"/><rect x="2.6" y="8" width="3.6" height="2.6" rx="0.5"/><rect x="2.6" y="13.1" width="3.6" height="2.6" rx="0.5"/><rect x="9" y="2.8" width="12.3" height="12.9" rx="0.8"/></g><g fill="#5f5f5f"><rect x="11.2" y="10" width="1.8" height="3.6"/><rect x="14.4" y="5.3" width="1.8" height="8.3"/><rect x="17.4" y="7.2" width="1.8" height="6.4"/></g></svg>
<svg class="b" style="left:942.8px;top:50px;" width="8" height="5" viewBox="0 0 8 5"><path d="M0 0H5.2L2.6 3Z" fill="#5f5f5f"/></svg>
<svg class="b" style="left:962px;top:41px;" width="22" height="20" viewBox="0 0 22 20"><path d="M1.9 3.9H18.9" stroke="#5f5f5f" stroke-width="1.9" fill="none"/><path d="M3.6 4.4V11.9H17.6V4.4M10.4 1.6V3.4M10.4 11.9V17.1M7.1 17.1H13.9" fill="none" stroke="#5f5f5f" stroke-width="1.2"/></svg>
</body></html>
